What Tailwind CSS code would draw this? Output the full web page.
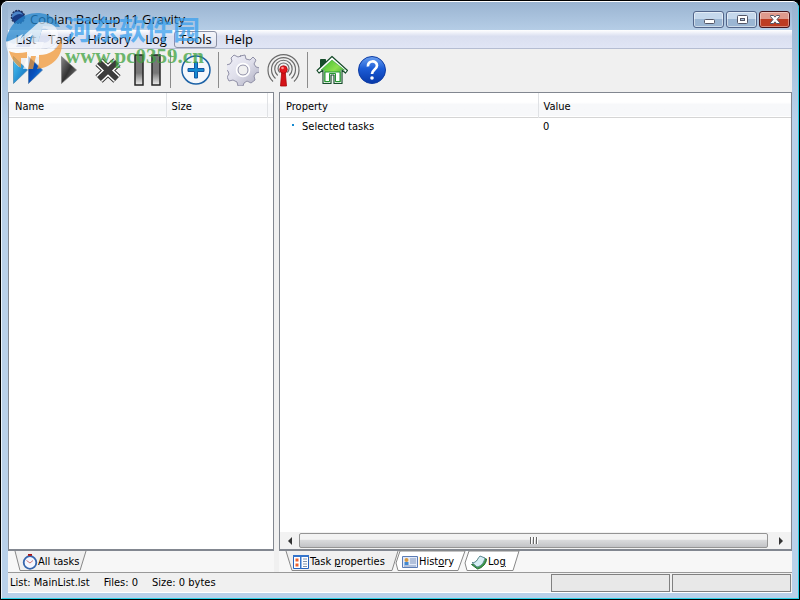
<!DOCTYPE html>
<html lang="en">
<head>
    <meta charset="UTF-8">
    <meta name="viewport" content="width=device-width, initial-scale=1.0">
    <title>Cobian Backup 11 Gravity</title>
    <script src="https://cdn.jsdelivr.net/npm/@tailwindcss/browser@4"></script>
</head>
<body class="bg-black">
<div class="relative flex h-screen flex-col overflow-hidden rounded-t-lg border border-black bg-[#b9d1ea] font-['DejaVu_Sans_Condensed',sans-serif] text-[11px] text-black">
    <div class="flex min-h-0 flex-1 flex-col rounded-t-md border border-t-white border-r-[#2bd0e6] border-b-[#2bd0e6] border-l-[#eaf3fb] bg-linear-to-b from-[#99b4d1] via-[#b9d1ea] via-20% to-[#b9d1ea] px-[6px] pb-[5px]">
        <!-- title bar -->
        <header class="flex h-7 shrink-0 items-center gap-1 bg-linear-to-b from-[#9ab4d1] to-[#b5cde6]">
            <svg class="ml-0.5 size-4" viewBox="0 0 16 16">
                <circle cx="8" cy="9" r="6.500" fill="#183c86" stroke="#23345e" stroke-width="1.500" stroke-dasharray="2 1"/>
                <path d="M2 7c4-5 9-4 11 0-3-2-7-1-11 3z" fill="#4c85c8"/>
            </svg>
            <h1 class="pt-1.5 font-['Open_Sans',sans-serif] text-[13px] leading-4">Cobian Backup 11 Gravity</h1>
            <div class="ml-auto flex gap-[2px] pt-1.5 pr-0.5">
                <button aria-label="Minimize" class="flex h-[17px] w-[31px] items-center justify-center rounded-[3px] border border-[#52658a] bg-linear-to-b from-[#c5d8ec] from-50% to-[#9bb6d3] to-50% inset-ring inset-ring-white/50">
                    <svg class="h-4 w-5" viewBox="0 0 20 16"><rect x="5.500" y="8.500" width="10" height="4" rx="1" fill="#fff" stroke="#535666"/></svg>
                </button>
                <button aria-label="Maximize" class="flex h-[17px] w-[31px] items-center justify-center rounded-[3px] border border-[#52658a] bg-linear-to-b from-[#c5d8ec] from-50% to-[#9bb6d3] to-50% inset-ring inset-ring-white/50">
                    <svg class="h-4 w-5" viewBox="0 0 20 16"><rect x="5.500" y="4.500" width="10" height="8" rx="1" fill="#fff" stroke="#535666"/><rect x="8.500" y="7.500" width="4" height="2" fill="#a9c4df" stroke="#535666"/></svg>
                </button>
                <button aria-label="Close" class="flex h-[17px] w-[31px] items-center justify-center rounded-[3px] border border-[#47141b] bg-linear-to-b from-[#df9a8d] from-50% to-[#bd3c22] to-50% inset-ring inset-ring-white/40">
                    <svg class="h-4 w-5" viewBox="0 0 20 16"><path d="M5.500 4.500h3l1.500 1.700 1.500-1.700h3v1l-2.500 3 2.500 3v1h-3l-1.500-1.700-1.500 1.700h-3v-1l2.500-3-2.500-3z" fill="#fff" stroke="#535666"/></svg>
                </button>
            </div>
        </header>
        <!-- client area -->
        <main class="flex min-h-0 flex-1 flex-col border-b border-white bg-[#f0f0f0]">
            <nav class="flex h-[19px] shrink-0 items-center border-b border-[#b5bdd2] bg-linear-to-b from-white via-[#dadff0] via-35% to-[#e0e5f5] font-['Open_Sans',sans-serif] text-[13px] leading-4">
                <button class="w-9 text-center">List</button>
                <button class="w-9 text-center">Task</button>
                <button class="w-[58px] text-center">History</button>
                <button class="w-9 text-center">Log</button>
                <button class="h-[17px] w-[43px] rounded-[3px] border border-[#8b91a5] bg-linear-to-b from-[#f4f5fa] to-[#dfe3f0] text-center leading-[14px]">Tools</button>
                <button class="w-11 text-center">Help</button>
            </nav>
            <div class="flex h-[43px] shrink-0 items-center pb-0.5">
                <button aria-label="Run all tasks" class="ml-1">
                    <svg class="h-10 w-9" viewBox="0 0 36 40">
                        <defs>
                            <linearGradient id="sky" x2="1" y2="1"><stop stop-color="#4cc8f5"/><stop offset="1" stop-color="#0865b8"/></linearGradient>
                            <linearGradient id="navy" x2="1" y2="1"><stop stop-color="#073c91"/><stop offset=".5" stop-color="#0750bd"/><stop offset="1" stop-color="#1590e8"/></linearGradient>
                        </defs>
                        <path d="M16.500 6.500v27l14-13.500z" fill="url(#navy)" stroke="#4773a5" stroke-width=".7"/>
                        <path d="M1.500 6.500v27l14-13.500z" fill="url(#sky)" stroke="#3c83b0" stroke-width=".7"/>
                    </svg>
                </button>
                <button aria-label="Run selected" class="ml-2">
                    <svg class="h-10 w-8" viewBox="0 0 32 40">
                        <defs><linearGradient id="iron" x2="1" y2="1"><stop stop-color="#888"/><stop offset=".5" stop-color="#333"/><stop offset="1" stop-color="#888"/></linearGradient></defs>
                        <path d="M5.500 6.500v27l15-13.500z" fill="url(#iron)" stroke="#777" stroke-width=".7"/>
                    </svg>
                </button>
                <button aria-label="Abort" class="ml-0.5">
                    <svg class="h-10 w-9" viewBox="0 0 36 40" fill="none" stroke-linejoin="round">
                        <path d="M9 12l18 17M27 12L9 29" stroke="#333" stroke-width="10.500"/>
                        <path d="M9 12l18 17M27 12L9 29" stroke="#fff" stroke-width="8.500"/>
                        <path d="M9 12l18 17M27 12L9 29" stroke="#3c3c3c" stroke-width="5.500"/>
                    </svg>
                </button>
                <button aria-label="Pause" class="ml-1.5">
                    <svg class="h-10 w-9" viewBox="0 0 36 40">
                        <defs><linearGradient id="bar" x2="0" y2="1"><stop stop-color="#777"/><stop offset=".6" stop-color="#777"/><stop offset="1" stop-color="#eee"/></linearGradient></defs>
                        <path d="M3 5h8v30H3zM20 5h8v30h-8z" fill="url(#bar)" stroke="#252525" stroke-width="1.500"/>
                    </svg>
                </button>
                <div class="ml-0.5 h-9 w-px bg-[#8c8c8c]"></div>
                <button aria-label="New task" class="ml-2">
                    <svg class="size-9" viewBox="0 0 36 36">
                        <circle cx="17" cy="18" r="14" fill="#f4f7fb" stroke="#1c62a6" stroke-width="1.500"/>
                        <path d="M15.500 10h3v6.500H25v3h-6.500V26h-3v-6.500H9v-3h6.500z" fill="#168bd2" stroke="#1557a3"/>
                    </svg>
                </button>
                <div class="ml-[3px] h-9 w-px bg-[#8c8c8c]"></div>
                <button aria-label="Options" class="ml-2">
                    <svg class="size-8" viewBox="-16 -16 32 32">
                        <defs><linearGradient id="steel" x2="1" y2="1"><stop stop-color="#f2f2fa"/><stop offset=".5" stop-color="#dedeea"/><stop offset="1" stop-color="#a9a9bd"/></linearGradient></defs>
                        <path fill-rule="evenodd" d="M-3-14l5-1 1 4 4 1 3-3 3 3-2 4 2 3 4 1v4l-4 1-2 3 1 4-4 3-4-2-3 2-1 3h-5l-1-4-4-2-4 1-2-4 2-3-1-3-3-2 1-4 4-1 2-3-1-3 3-3 4 2 3-1zM0-5c-3 0-5 2-5 5s2 5 5 5 5-2 5-5-2-5-5-5z" fill="url(#steel)" stroke="#9191a7" stroke-linejoin="round"/>
                        <circle r="6.500" fill="none" stroke="#fff" stroke-width="1.500"/>
                    </svg>
                </button>
                <button aria-label="Remote" class="ml-2">
                    <svg class="h-10 w-9" viewBox="0 0 36 40" fill="none">
                        <path d="M6 31.500a15.500 15.500 0 1 1 21 0M8.500 28.500a12 12 0 1 1 16 0M10.700 25.500a8.700 8.700 0 1 1 11.500 0M12.800 22.500a5.500 5.500 0 1 1 7.500 0" stroke="#6b6b6b" stroke-width="1.200"/>
                        <path d="M15 19h3l1.500 17h-6z" fill="#d51218" stroke="#a80808" stroke-width=".8"/>
                        <circle cx="16.500" cy="19.500" r="3.800" fill="#e4161c" stroke="#9c080c" stroke-width=".7"/>
                        <circle cx="15.500" cy="18" r="1.300" fill="#ff9292"/>
                    </svg>
                </button>
                <div class="ml-1 h-9 w-px bg-[#8c8c8c]"></div>
                <button aria-label="Home" class="ml-2">
                    <svg class="h-10 w-9" viewBox="0 0 36 40" stroke-linejoin="round">
                        <defs><linearGradient id="leaf" x2="1" y2="1"><stop stop-color="#35b82b"/><stop offset=".5" stop-color="#8cdf50"/><stop offset="1" stop-color="#16901d"/></linearGradient></defs>
                        <path d="M4.500 9.500h5v5l-5 4z" fill="#174d2b" stroke="#174d2b"/>
                        <path d="M16 6.500L1 20.500l2 2.500 4-3v13.500h8V25h3v8.500h8V20l3.500 3 2-2.500z" fill="#fff" stroke="#174d2b" stroke-width="1.200"/>
                        <path d="M16 10L5 20l3.500-.5v12.500h5v-8.500h6v8.500h5V19.500l4 .5z" fill="url(#leaf)" stroke="#259632" stroke-width=".5"/>
                        <path d="M9 22h15v9.500h-4.500v-8h-6v8H9z" fill="#fff" stroke="#259632"/>
                    </svg>
                </button>
                <button aria-label="Help" class="ml-1">
                    <svg class="h-10 w-9" viewBox="0 0 36 40">
                        <defs><linearGradient id="globe" x2="0" y2="1"><stop stop-color="#6ba0f0"/><stop offset=".45" stop-color="#1c5cd6"/><stop offset="1" stop-color="#0738a8"/></linearGradient></defs>
                        <circle cx="16" cy="20" r="13.500" fill="url(#globe)" stroke="#0f3da4"/>
                        <path d="M12 16.500c-1-6 9-7 9-1 0 4-5 4-5 8.500" fill="none" stroke="#fff" stroke-width="2.700"/>
                        <circle cx="16" cy="28" r="1.800" fill="#fff"/>
                    </svg>
                </button>
            </div>
            <div class="flex min-h-0 flex-1 gap-[5px]">
                <!-- task list -->
                <section class="flex w-[34%] max-w-[266px] flex-col">
                    <div class="min-h-0 flex-1 border border-b-2 border-[#828790] bg-white">
                        <table class="w-full table-fixed">
                            <thead>
                                <tr class="h-6 border-b border-[#d5d5d5] bg-linear-to-b from-white from-40% to-[#f7f8fa] to-50% text-left">
                                    <th class="w-[157px] border-r border-[#e0e2e5] pt-1 pl-1.5 font-normal">Name</th>
                                    <th class="border-r border-[#e0e2e5] pt-1 pl-[5px] font-normal">Size</th>
                                    <th class="w-[6px]"></th>
                                </tr>
                            </thead>
                        </table>
                    </div>
                    <div class="flex h-[21px] shrink-0 bg-[#f7f7f7] pl-1.5">
                        <button class="relative flex h-5 w-[73px] items-center pt-0.5 pl-2">
                            <svg class="absolute inset-0 size-full" viewBox="0 0 73 20" preserveAspectRatio="none"><path d="M1 0l5 19.500h60L72 0" fill="#f0f0f0" stroke="#888"/></svg>
                            <svg class="relative size-4 shrink-0" viewBox="0 0 16 16"><circle cx="8" cy="8.500" r="6.300" fill="#f5f7ff" stroke="#3766ad" stroke-width="1.800"/><path d="M6 .8h4" stroke="#a11" stroke-width="2"/><path d="M4.500 6.500L8 9l3-2.500" fill="none" stroke="#c77"/></svg>
                            <span class="relative whitespace-nowrap">All tasks</span>
                        </button>
                    </div>
                </section>
                <!-- task details -->
                <section class="flex min-w-0 flex-1 flex-col">
                    <div class="flex min-h-0 flex-1 flex-col border border-b-2 border-[#828790] bg-white">
                        <table class="w-full table-fixed">
                            <thead>
                                <tr class="h-6 border-b border-[#d5d5d5] bg-linear-to-b from-white from-40% to-[#f7f8fa] to-50% text-left">
                                    <th class="w-[258px] border-r border-[#e0e2e5] pt-1 pl-1.5 font-normal">Property</th>
                                    <th class="pt-1 pl-[5px] font-normal">Value</th>
                                </tr>
                            </thead>
                            <tbody>
                                <tr class="h-5">
                                    <td class="pl-3"><span class="mr-2 mb-1 inline-block size-0.5 bg-[#168bd2]"></span>Selected tasks</td>
                                    <td class="pl-[5px]">0</td>
                                </tr>
                            </tbody>
                        </table>
                        <div class="mt-auto flex h-[17px] items-center bg-[#f2f2f2] px-px">
                            <button aria-label="Scroll left" class="flex w-[18px] justify-center"><svg class="h-2 w-1" viewBox="0 0 4 8"><path d="M4 0v8L0 4z" fill="#333"/></svg></button>
                            <div class="flex h-[15px] flex-1 items-center justify-center gap-px rounded-[2px] border border-[#949494] bg-linear-to-b from-[#f3f3f3] from-40% via-[#d8d9db] via-50% to-[#c2c3c6]">
                                <i class="h-[7px] w-0.5 border-r border-white bg-[#666]"></i>
                                <i class="h-[7px] w-0.5 border-r border-white bg-[#666]"></i>
                                <i class="h-[7px] w-0.5 border-r border-white bg-[#666]"></i>
                            </div>
                            <button aria-label="Scroll right" class="ml-1 flex w-[18px] justify-center"><svg class="h-2 w-1" viewBox="0 0 4 8"><path d="M0 0v8l4-4z" fill="#333"/></svg></button>
                        </div>
                    </div>
                    <div class="flex h-[21px] shrink-0 bg-[#f7f7f7] pl-1.5">
                        <button class="relative flex h-5 w-[114px] items-center gap-px pt-0.5 pl-2">
                            <svg class="absolute inset-0 size-full" viewBox="0 0 114 20" preserveAspectRatio="none"><path d="M1 0l6 19.500h100L113 0" fill="#f0f0f0" stroke="#888"/></svg>
                            <svg class="relative size-4 shrink-0" viewBox="0 0 16 16"><path d="M.5 1.500h15v13H.5z" fill="#fff" stroke="#2863bd"/><path d="M0 1h16v2H0zM7 1h1.500v14H7z" fill="#3474cb"/><path d="M2.500 4.500h3v3h-3zM2.500 9.500h3v3h-3z" fill="#ef622d"/><path d="M10 5h4M10 7.500h4M10 10h4M10 12.500h4" stroke="#8293ac"/></svg>
                            <span class="relative whitespace-nowrap">Task <u>p</u>roperties</span>
                        </button>
                        <button class="relative flex h-5 w-[69px] items-center gap-px pt-0.5 pl-[3px]">
                            <svg class="absolute inset-0 size-full overflow-visible" viewBox="0 0 69 20" preserveAspectRatio="none"><path d="M-3 12l2 7.500h60L66 0H1l-4 12" fill="#fff" stroke="#888"/></svg>
                            <svg class="relative size-4 shrink-0" viewBox="0 0 16 16"><path d="M.5 2.500h15v11H.5z" fill="#e2eaf9" stroke="#5b7cb5"/><path d="M8 5h6M8 7h6M8 9h6M2 12h12" stroke="#8096bc"/><circle cx="4.500" cy="6" r="2" fill="#d69a43"/><path d="M2.500 11V8h4v3z" fill="#4288cf"/></svg>
                            <span class="relative">Hist<u>o</u>ry</span>
                        </button>
                        <button class="relative flex h-5 w-[54px] items-center gap-px pt-0.5 pl-[3px]">
                            <svg class="absolute inset-0 size-full overflow-visible" viewBox="0 0 54 20" preserveAspectRatio="none"><path d="M-3 12l2 7.500h46L51 0H1l-4 12" fill="#fff" stroke="#888"/></svg>
                            <svg class="relative size-4 shrink-0" viewBox="0 0 16 16"><path d="M.5 10.500C5 10 6 5 9 3l6.500 2c0 4-4 9-9 10z" fill="#3d9d49" stroke="#276d34"/><path d="M1 8.500C6 9 6 5 9 2l5 2c-1 4-3 8-8 9z" fill="#d7eef5" stroke="#5d8a92"/></svg>
                            <span class="relative">Lo<u>g</u></span>
                        </button>
                    </div>
                </section>
            </div>
            <footer class="flex h-5 shrink-0 items-center gap-[2px] border-t border-[#999]">
                <span class="pt-0.5 pl-0.5">List: MainList.lst</span>
                <span class="ml-3 pt-0.5">Files: 0</span>
                <span class="ml-3 pt-0.5">Size: 0 bytes</span>
                <div class="ml-auto h-[18px] w-[119px] border border-[#808080] bg-[#e8e8e8]"></div>
                <div class="mr-px h-[18px] w-[119px] border border-[#808080] bg-[#e8e8e8]"></div>
            </footer>
        </main>
    </div>
    <!-- site stamp -->
    <div class="pointer-events-none absolute top-2.5 left-1 flex items-start opacity-75">
        <svg class="h-[60px] w-[58px]" viewBox="0 0 58 60">
            <path d="M1 30C4 9 24-3 43 4c6 3 10 7 12 12L38 15l-5 16h-9l3-9-13 10-5 1z" fill="#2788ce"/>
            <path d="M15 28L34 11c12-1 20 4 19 15-1 7-8 12-18 12l2-6c6 0 9-3 9-8s-4-7-9-6l-6 20h-7l4-14L4 38z" fill="#fff" fill-opacity=".8"/>
            <path d="M1 31c8-3 12-5 17-8l-7 13h18l2-5h8l-3 7c8 0 14-3 17-9-2 13-14 18-23 17l-5 12h-7l5-15-9 1v12C8 51 1 42 1 31z" fill="#fff" fill-opacity=".9"/>
            <path d="M4 40c6 3 12 2 18 1v6h-6v10C10 53 6 47 4 40zM26 45h5l-3 13h-5zM34 44c11 0 20-6 22-17 4 15-6 29-24 31l2-6z" fill="#f39a38"/>
        </svg>
        <div class="ml-0.5 flex flex-col font-bold">
            <span class="font-['Noto_Sans_CJK_SC',sans-serif] text-[27px] leading-[35px] text-[#3aa0ee]" lang="zh">河东软件园</span>
            <span class="font-['Liberation_Serif',serif] text-[21px] leading-5 text-[#3fa23f]">www.pc0359.cn</span>
        </div>
    </div>
</div>
</body>
</html>
